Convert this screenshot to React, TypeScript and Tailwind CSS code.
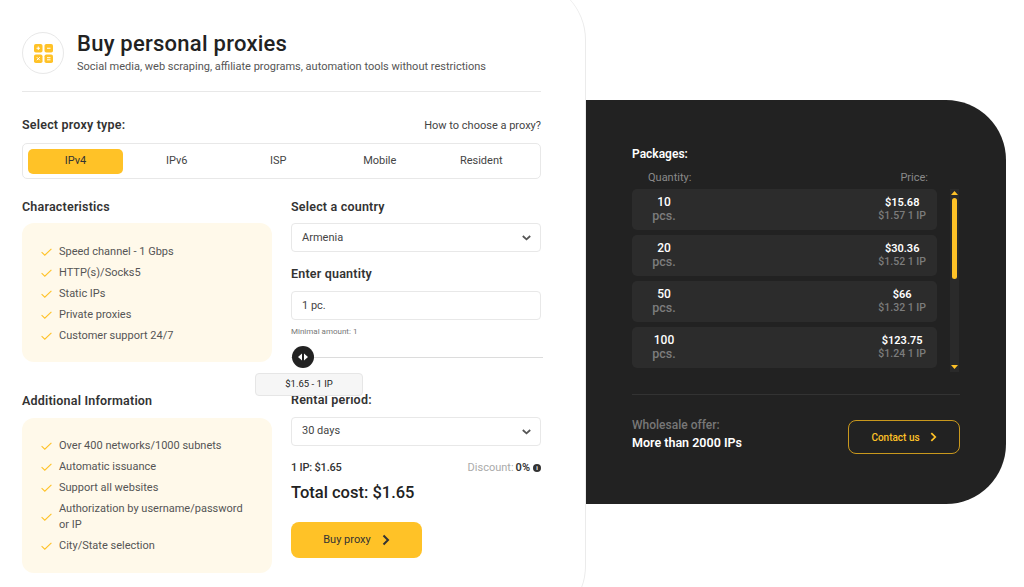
import React from "react";

const font = { fontFamily: "Roboto, 'Liberation Sans', sans-serif" };

function Check() {
  return (
    <svg width="11" height="8" viewBox="0 0 11 8" fill="none" className="shrink-0">
      <path d="M0.6 4.2 L3.8 7.2 L10.4 0.8" stroke="#ffc227" strokeWidth="1.1" />
    </svg>
  );
}

function Chevron({ className = "" }: { className?: string }) {
  return (
    <svg width="8" height="12" viewBox="0 0 8 12" fill="none" className={className}>
      <path d="M1.5 1.5 L6 6 L1.5 10.5" stroke="currentColor" strokeWidth="2" />
    </svg>
  );
}

function Down() {
  return (
    <svg width="9" height="6" viewBox="0 0 9 6" fill="none">
      <path d="M0.8 1 L4.5 4.4 L8.2 1" stroke="#555" strokeWidth="1.8" />
    </svg>
  );
}

function List({ items }: { items: string[] }) {
  return (
    <ul className="flex flex-col gap-[5px]">
      {items.map((t) => (
        <li key={t} className="flex items-center gap-[7px] text-[11px] leading-[16px] text-[#555]">
          <Check />
          <span>{t}</span>
        </li>
      ))}
    </ul>
  );
}

const Heading = ({ children, className = "" }: { children: React.ReactNode; className?: string }) => (
  <h3 className={`text-[12.5px] leading-[16px] font-semibold text-[#333] tracking-[0.2px] ${className}`}>{children}</h3>
);

const packages = [
  ["10", "$15.68", "$1.57 1 IP"],
  ["20", "$30.36", "$1.52 1 IP"],
  ["50", "$66", "$1.32 1 IP"],
  ["100", "$123.75", "$1.24 1 IP"],
];

export default function App() {
  return (
    <div style={font} className="relative h-[587px] w-[1024px] overflow-hidden bg-white flex items-start">
      {/* Left card */}
      <div className="mt-[-20px] h-[646px] w-[586px] shrink-0 rounded-r-[60px] border-r border-[#ebebeb] bg-white pl-[22px] pr-[44px] pt-[52px]">
        <div className="flex items-start gap-[13px] border-b border-[#e8e8e8] h-[60px]">
          <div className="flex h-[42px] w-[42px] shrink-0 items-center justify-center rounded-full border border-[#e8e8e8]">
            <svg width="19" height="19" viewBox="0 0 19 19" fill="none">
              <rect x="0" y="0" width="8.5" height="8.5" rx="1.8" fill="#ffc227" />
              <rect x="10.5" y="0" width="8.5" height="8.5" rx="1.8" fill="#ffc227" />
              <rect x="0" y="10.5" width="8.5" height="8.5" rx="1.8" fill="#ffc227" />
              <rect x="10.5" y="10.5" width="8.5" height="8.5" rx="1.8" fill="#ffc227" />
              <path d="M2.5 4.25h3.5M4.25 2.5v3.5M13 4.25h3.5M2.8 13.2l3 3M5.8 13.2l-3 3M13 13.7h3.5M13 15.8h3.5" stroke="#fff" strokeWidth="1" />
            </svg>
          </div>
          <div>
            <h1 className="text-[22px] leading-[24px] font-medium text-[#222] tracking-[0.25px]">Buy personal proxies</h1>
            <p className="mt-[3px] text-[11px] leading-[15px] text-[#555]">
              Social media, web scraping, affiliate programs, automation tools without restrictions
            </p>
          </div>
        </div>

        <div className="mt-[25px] flex items-center justify-between">
          <Heading>Select proxy type:</Heading>
          <a className="text-[11px] leading-[15px] text-[#444]">How to choose a proxy?</a>
        </div>

        <div className="mt-[10px] flex h-[36px] items-center rounded-[5px] border border-[#e8e8e8] px-[5px]">
          <div className="flex h-[25px] w-[95px] shrink-0 items-center justify-center rounded-[5px] bg-[#ffc227] text-[11px] text-[#333]">IPv4</div>
          <div className="ml-[3px] flex">
            {["IPv6", "ISP", "Mobile", "Resident"].map((t) => (
              <div key={t} className="w-[101.5px] text-center text-[11px] text-[#444]">{t}</div>
            ))}
          </div>
        </div>

        <div className="mt-[20px] grid grid-cols-[250px_250px] gap-x-[19px]">
          {/* Left column */}
          <div>
            <Heading>Characteristics</Heading>
            <div className="mt-[8px] h-[139px] rounded-[12px] bg-[#fff9ea] pl-[19px] pr-[10px] pt-[21px]">
              <List items={["Speed channel - 1 Gbps", "HTTP(s)/Socks5", "Static IPs", "Private proxies", "Customer support 24/7"]} />
            </div>
            <Heading className="mt-[31px]">Additional Information</Heading>
            <div className="mt-[9px] h-[155px] rounded-[12px] bg-[#fff9ea] pl-[19px] pr-[22px] pt-[20px]">
              <List
                items={[
                  "Over 400 networks/1000 subnets",
                  "Automatic issuance",
                  "Support all websites",
                  "Authorization by username/password or IP",
                  "City/State selection",
                ]}
              />
            </div>
          </div>

          {/* Right column */}
          <div className="relative">
            <Heading>Select a country</Heading>
            <div className="mt-[8px] flex h-[29px] items-center justify-between rounded-[4px] border border-[#e8e8e8] pl-[10px] pr-[9px] pt-[1px] text-[11px] text-[#444]">
              <span>Armenia</span>
              <Down />
            </div>
            <Heading className="mt-[14px]">Enter quantity</Heading>
            <div className="mt-[9px] flex h-[29px] items-center rounded-[4px] border border-[#e8e8e8] pl-[10px] pt-[1px] text-[11px] text-[#444]">1 pc.</div>
            <p className="mt-[7px] text-[8px] leading-[10px] text-[#777]">Minimal amount: 1</p>

            <div className="relative mt-[9px] h-[22px] w-[252px]">
              <div className="absolute left-0 right-0 top-[11px] h-px bg-[#dcdcdc]" />
              <div className="absolute left-[1px] top-0 flex h-[22px] w-[22px] items-center justify-center rounded-full bg-[#222]">
                <svg width="12" height="8" viewBox="0 0 12 8" fill="#fff">
                  <path d="M5 0.5 V7.5 L1 4 Z M7 0.5 V7.5 L11 4 Z" />
                </svg>
              </div>
              <div className="absolute left-[-36px] top-[27px] z-10 flex h-[23px] w-[108px] items-center justify-center rounded-[4px] border border-[#e6e6e6] bg-[#f6f6f6] text-[9.5px] text-[#222]">
                $1.65 - 1 IP
              </div>
            </div>

            <Heading className="mt-[24px]">Rental period:</Heading>
            <div className="mt-[9px] flex h-[29px] items-center justify-between rounded-[4px] border border-[#e8e8e8] pl-[10px] pr-[9px] text-[11px] text-[#444]">
              <span>30 days</span>
              <Down />
            </div>
            <div className="mt-[15px] flex items-center justify-between text-[11px] leading-[14px]">
              <span className="font-medium text-[#333] tracking-[-0.2px]">1 IP: $1.65</span>
              <span className="flex items-center gap-[2px] text-[#aaa]">
                Discount: <b className="font-semibold text-[#333]">0%</b>
                <span className="ml-[1px] flex h-[8px] w-[8px] items-center justify-center rounded-full bg-[#333] text-[6px] font-bold leading-none text-white">i</span>
              </span>
            </div>
            <p className="mt-[7px] text-[16.5px] leading-[22px] font-medium text-[#222]">Total cost: $1.65</p>
            <button className="mt-[18px] flex h-[36px] w-[131px] items-center justify-center gap-[11px] rounded-[8px] bg-[#ffc227] text-[11px] text-[#333]">
              Buy proxy
              <Chevron />
            </button>
          </div>
        </div>
      </div>

      {/* Dark panel */}
      <div className="mt-[100px] h-[404px] w-[420px] shrink-0 rounded-r-[60px] bg-[#222] pl-[46px] pr-[46px] pt-[47px]">
        <h3 className="text-[12px] leading-[14px] font-semibold text-white">Packages:</h3>
        <div className="mt-[10px] flex justify-between pl-[16px] pr-[32px] text-[11px] leading-[14px] text-[#8a8a8a]">
          <span>Quantity:</span>
          <span>Price:</span>
        </div>
        <div className="mt-[4px] flex gap-[13px]">
          <div className="flex w-[305px] shrink-0 flex-col gap-[5px]">
            {packages.map(([q, p, u]) => (
              <div key={q} className="flex h-[41px] items-center justify-between rounded-[5px] bg-[#2c2c2c] pl-[12px] pr-[11px]">
                <div className="w-[40px] pb-[2px] text-center">
                  <div className="text-[12px] leading-[14px] font-medium text-white">{q}</div>
                  <div className="text-[12.5px] leading-[14px] font-medium text-[#7c7c7c]">pcs.</div>
                </div>
                <div className="pb-[2px] text-center">
                  <div className="text-[11px] leading-[13px] font-semibold text-white">{p}</div>
                  <div className="text-[10.5px] leading-[13px] font-medium text-[#7c7c7c]">{u}</div>
                </div>
              </div>
            ))}
          </div>
          <div className="flex h-[183px] w-[9px] flex-col items-center bg-[#2a2a2a]">
            <svg width="7" height="4" viewBox="0 0 7 4" fill="#ffc227" className="mt-[2px]">
              <path d="M3.5 0 L7 4 H0 Z" />
            </svg>
            <div className="mt-[3px] h-[81px] w-[5px] rounded-full bg-[#ffc227]" />
            <svg width="7" height="4" viewBox="0 0 7 4" fill="#ffc227" className="mt-auto mb-[3px]">
              <path d="M0 0 H7 L3.5 4 Z" />
            </svg>
          </div>
        </div>
        <div className="mt-[22px] h-px w-[328px] bg-[#333]" />
        <div className="mt-[22px] flex w-[328px] items-center justify-between">
          <div className="mb-[6px]">
            <div className="text-[12px] leading-[16px] font-medium text-[#777]">Wholesale offer:</div>
            <div className="mt-[2px] text-[12.5px] leading-[16px] font-semibold text-white">More than 2000 IPs</div>
          </div>
          <button className="flex h-[34px] w-[112px] items-center justify-center gap-[10px] rounded-[8px] border border-[#c9981d] text-[10px] font-medium text-[#ffc227]">
            Contact us
            <Chevron className="w-[7px]" />
          </button>
        </div>
      </div>
    </div>
  );
}
